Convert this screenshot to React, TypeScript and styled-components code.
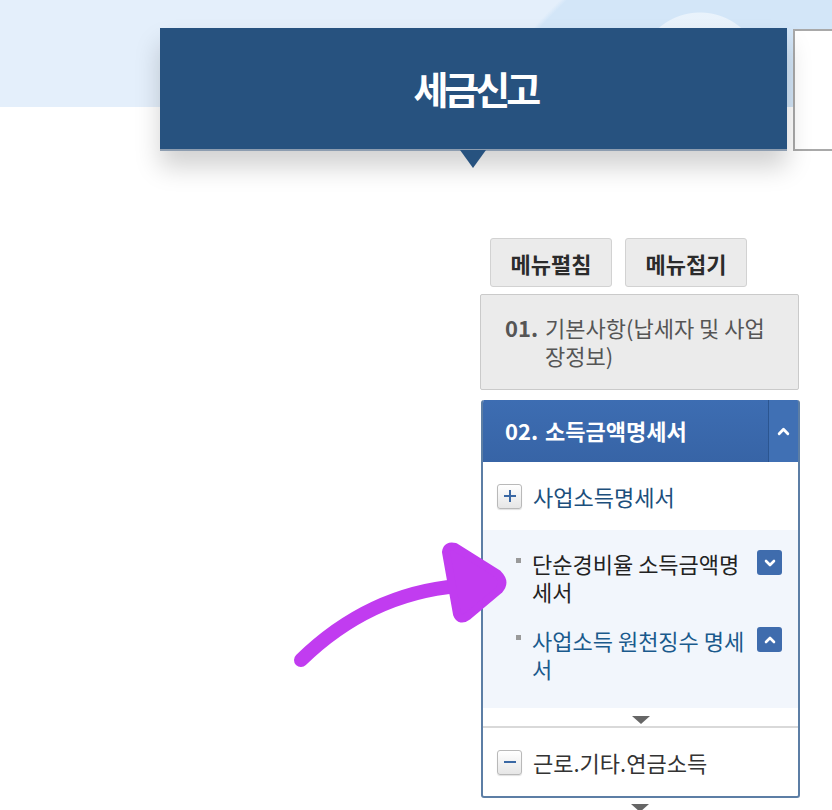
import React from 'react'
import styled, { createGlobalStyle } from 'styled-components'

const GlobalStyle = createGlobalStyle`
  html, body {
    margin: 0;
    padding: 0;
    background: #ffffff;
  }
  body {
    font-family: "Noto Sans CJK KR", "Noto Sans", sans-serif;
  }
`

const Page = styled.div`
  position: relative;
  width: 832px;
  height: 810px;
  overflow: hidden;
  background:
    radial-gradient(circle at 700px 75px, rgba(255,255,255,0.5) 0 62px, transparent 63px) 0 0 / 100% 107px no-repeat,
    radial-gradient(ellipse 560px 420px at 1000px 260px, #d3e6f8 0 99%, transparent 100%) 0 0 / 100% 107px no-repeat,
    linear-gradient(to bottom, #e4effb 0 107px, #ffffff 107px);
`

const TitleRow = styled.div`
  display: flex;
  align-items: flex-start;
  gap: 6px;
  padding: 28px 0 0 160px;
`

const TitleBox = styled.div`
  position: relative;
  width: 638px;
  height: 123px;
  background: #27527f;
  border-bottom: 2px solid #8d9db0;
  box-sizing: border-box;
  box-shadow: 0 16px 24px rgba(0, 0, 0, 0.18);
  display: flex;
  align-items: center;
  justify-content: center;
  color: #ffffff;
  font-size: 38px;
  font-weight: 700;
  letter-spacing: -4px;
  padding: 0 0 2px 4px;

  &::after {
    content: '';
    position: absolute;
    left: 50%;
    bottom: -19px;
    margin-left: -13px;
    border-left: 13px solid transparent;
    border-right: 13px solid transparent;
    border-top: 18px solid #27527f;
  }
`

const SideBox = styled.div`
  width: 40px;
  height: 122px;
  margin-top: 1px;
  box-sizing: border-box;
  background: #ffffff;
  border: 2px solid #a9a9a9;
  border-right: none;
`

const Menu = styled.div`
  width: 320px;
  margin: 87px 0 0 480px;
  display: flex;
  flex-direction: column;
`

const ButtonRow = styled.div`
  display: flex;
  gap: 13px;
  padding-left: 10px;
`

const ToolButton = styled.button`
  width: 122px;
  height: 49px;
  background: #ebebeb;
  border: 1px solid #d2d2d2;
  border-radius: 3px;
  font-family: inherit;
  font-size: 22px;
  font-weight: 700;
  color: #2b2b2b;
  padding: 0;
`

const ClosedSection = styled.div`
  margin-top: 7px;
  width: 319px;
  box-sizing: border-box;
  background: #ebebeb;
  border: 1px solid #cacaca;
  border-radius: 2px;
  padding: 18px 16px 20px 24px;
  display: flex;
  font-size: 22px;
  line-height: 28px;
  color: #555555;
`

const StepNo = styled.span`
  flex: none;
  width: 40px;
  font-weight: 700;
  color: ${p => (p.$light ? '#ffffff' : '#555555')};
`

const OpenSection = styled.div`
  margin-top: 10px;
  width: 319px;
  margin-left: 1px;
  box-sizing: border-box;
  border: 2px solid #5c7ea5;
  border-top: none;
  border-radius: 3px;
  overflow: hidden;
  background: #ffffff;
`

const SectionHead = styled.div`
  height: 62px;
  display: flex;
  background: linear-gradient(to bottom, #3d6db2, #3764a6);
  color: #ffffff;
  font-size: 22px;
  font-weight: 700;
`

const HeadTitle = styled.div`
  flex: 1;
  display: flex;
  align-items: center;
  padding-left: 22px;
  padding-bottom: 2px;
`

const HeadToggle = styled.div`
  width: 29px;
  border-left: 1px solid #2b5590;
  display: flex;
  align-items: center;
  justify-content: center;
  background: #4070b4;
`

const GroupRow = styled.div`
  height: 68px;
  display: flex;
  align-items: center;
  gap: 11px;
  padding-left: 14px;
  font-size: 22px;
  color: ${p => (p.$blue ? '#1c4f7c' : '#333333')};
`

const BoxIcon = styled.span`
  width: 25px;
  height: 25px;
  box-sizing: border-box;
  border: 1px solid #b9b9b9;
  border-radius: 3px;
  background: linear-gradient(to bottom, #ffffff, #e6e6e6);
  box-shadow: 0 1px 1px rgba(0, 0, 0, 0.12);
  display: flex;
  align-items: center;
  justify-content: center;
`

const SubPanel = styled.div`
  background: #f2f6fc;
  padding: 19px 16px 26px 33px;
  display: flex;
  flex-direction: column;
  gap: 21px;
`

const SubItem = styled.div`
  display: flex;
  align-items: flex-start;
  font-size: 22px;
  line-height: 28px;
  color: ${p => (p.$active ? '#1a5a8c' : '#222222')};
`

const Bullet = styled.span`
  flex: none;
  width: 5px;
  height: 5px;
  margin: 9px 11px 0 0;
  background: #9a9a9a;
`

const SubText = styled.span`
  flex: 1;
  padding-right: 4px;
`

const MiniButton = styled.span`
  flex: none;
  width: 25px;
  height: 25px;
  margin-top: 1px;
  border-radius: 3px;
  background: #3f6cad;
  display: flex;
  align-items: center;
  justify-content: center;
`

const CaretDivider = styled.div`
  height: 18px;
  display: flex;
  justify-content: center;
  border-bottom: 2px solid #d9d9d9;
`

const Caret = styled.span`
  display: block;
  margin-top: ${p => p.$top ?? 8}px;
  width: 0;
  height: 0;
  border-left: 9px solid transparent;
  border-right: 9px solid transparent;
  border-top: 8px solid #666666;
`

const OuterCaret = styled.div`
  display: flex;
  justify-content: center;
`

const ArrowOverlay = styled.svg`
  position: absolute;
  left: 0;
  top: 0;
  pointer-events: none;
`

const Chevron = ({ up, size = 12 }: { up?: boolean; size?: number }) => (
  <svg width={size} height={size} viewBox="0 0 12 12">
    <path
      d={up ? 'M2 8 L6 4 L10 8' : 'M2 4 L6 8 L10 4'}
      fill="none"
      stroke="#ffffff"
      strokeWidth="2.6"
      strokeLinecap="round"
      strokeLinejoin="round"
    />
  </svg>
)

const Sign = ({ plus }: { plus?: boolean }) => (
  <svg width="14" height="14" viewBox="0 0 14 14">
    <path d="M1 7 H13" stroke="#3a68a4" strokeWidth="2" />
    {plus && <path d="M7 1 V13" stroke="#3a68a4" strokeWidth="2" />}
  </svg>
)

const App = () => {
  return (
    <Page>
      <GlobalStyle />
      <TitleRow>
        <TitleBox>세금신고</TitleBox>
        <SideBox />
      </TitleRow>

      <Menu>
        <ButtonRow>
          <ToolButton>메뉴펼침</ToolButton>
          <ToolButton>메뉴접기</ToolButton>
        </ButtonRow>

        <ClosedSection>
          <StepNo>01.</StepNo>
          <span>기본사항(납세자 및 사업장정보)</span>
        </ClosedSection>

        <OpenSection>
          <SectionHead>
            <HeadTitle>
              <StepNo $light>02.</StepNo>
              소득금액명세서
            </HeadTitle>
            <HeadToggle>
              <Chevron up size={13} />
            </HeadToggle>
          </SectionHead>

          <GroupRow $blue>
            <BoxIcon><Sign plus /></BoxIcon>
            사업소득명세서
          </GroupRow>

          <SubPanel>
            <SubItem>
              <Bullet />
              <SubText>단순경비율 소득금액명세서</SubText>
              <MiniButton><Chevron /></MiniButton>
            </SubItem>
            <SubItem $active>
              <Bullet />
              <SubText>사업소득 원천징수 명세서</SubText>
              <MiniButton><Chevron up /></MiniButton>
            </SubItem>
          </SubPanel>

          <CaretDivider>
            <Caret />
          </CaretDivider>

          <GroupRow>
            <BoxIcon><Sign /></BoxIcon>
            근로.기타.연금소득
          </GroupRow>
        </OpenSection>

        <OuterCaret>
          <Caret $top={6} />
        </OuterCaret>
      </Menu>

      <ArrowOverlay width="832" height="810" viewBox="0 0 832 810">
        <path
          d="M301 660 C 340 622, 390 592, 458 586"
          fill="none"
          stroke="#c13cf0"
          strokeWidth="14"
          strokeLinecap="round"
        />
        <path
          d="M446 552 Q 447 545, 455 547 L 498 574 Q 506 582, 499 590 L 468 616 Q 460 622, 457 614 Z"
          fill="#c13cf0"
          stroke="#c13cf0"
          strokeWidth="8"
          strokeLinejoin="round"
        />
      </ArrowOverlay>
    </Page>
  )
}

export default App
